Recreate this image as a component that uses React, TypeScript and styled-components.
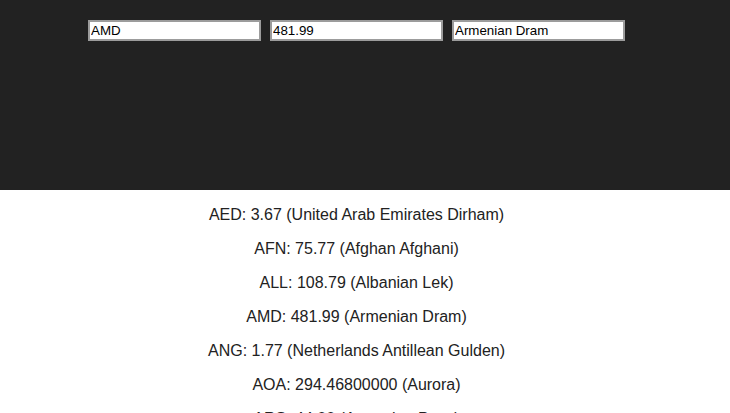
import { createGlobalStyle, styled } from "styled-components";

const GlobalStyle = createGlobalStyle`
  body {
    margin: 0;
    font-family: "Liberation Sans", Arial, sans-serif;
    background: #fff;
  }
`;

// the reference was laid out beside a 17px scrollbar, so content is centred on 713px
const Header = styled.div`
  background-color: #222222;
  height: 190px;
  box-sizing: border-box;
  padding: 20px 17px 0 0;
  display: flex;
  justify-content: center;
  gap: 9px;
  align-items: flex-start;
`;

const Field = styled.input`
  width: 173px;
  height: 21px;
  box-sizing: border-box;
  border: 2px solid #9c9c9c;
  padding: 1px 1px;
  font-family: "Liberation Sans", Arial, sans-serif;
  font-size: 13.33px;
  color: #000;
  background: #fff;
  outline: none;
`;

const Rates = styled.div`
  display: flex;
  flex-direction: column;
  align-items: center;
  padding-right: 17px;
`;

const Rate = styled.p`
  margin: 16px 0 0;
  font-size: 16px;
  line-height: 18px;
  color: #222;
`;

type Currency = { code: string; rate: string; name: string };

const currencies: Currency[] = [
  { code: "AED", rate: "3.67", name: "United Arab Emirates Dirham" },
  { code: "AFN", rate: "75.77", name: "Afghan Afghani" },
  { code: "ALL", rate: "108.79", name: "Albanian Lek" },
  { code: "AMD", rate: "481.99", name: "Armenian Dram" },
  { code: "ANG", rate: "1.77", name: "Netherlands Antillean Gulden" },
  { code: "AOA", rate: "294.46800000", name: "Aurora" },
  { code: "ARS", rate: "44.00", name: "Argentine Peso" },
];

const App = () => {
  return (
    <>
      <GlobalStyle />
      <Header>
        <Field defaultValue="AMD" />
        <Field defaultValue="481.99" />
        <Field defaultValue="Armenian Dram" />
      </Header>
      <Rates>
        {currencies.map((c) => (
          <Rate key={c.code}>
            {c.code}: {c.rate} ({c.name})
          </Rate>
        ))}
      </Rates>
    </>
  );
};

export default App;
